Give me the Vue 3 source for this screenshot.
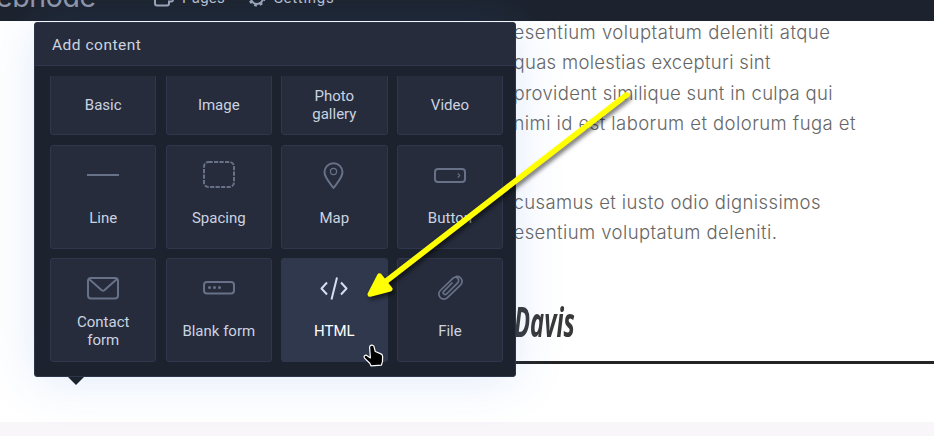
<script setup>
const tiles = [
  { label: 'Basic' },
  { label: 'Image' },
  { label: 'Photo gallery' },
  { label: 'Video' },
  { label: 'Line', icon: 'line' },
  { label: 'Spacing', icon: 'spacing' },
  { label: 'Map', icon: 'map' },
  { label: 'Button', icon: 'button' },
  { label: 'Contact form', icon: 'mail' },
  { label: 'Blank form', icon: 'form' },
  { label: 'HTML', icon: 'html', active: true },
  { label: 'File', icon: 'file' },
]
const paragraphs = [
  [
    { text: 'esentium voluptatum deleniti atque', width: 316.5 },
    { text: 'quas molestias excepturi sint', width: 257 },
    { text: 'provident similique sunt in culpa qui', width: 319 },
    { text: 'nimi id est laborum et dolorum fuga et', width: 342 },
  ],
  [
    { text: 'cusamus et iusto odio dignissimos', width: 307 },
    { text: 'esentium voluptatum deleniti.', width: 263.5 },
  ],
]
</script>

<template>
  <div class="page">
    <header class="topbar">
      <div class="bar">
        <span class="logo">ebnode</span>
        <span class="nav pages">
          <svg width="20" height="18" viewBox="0 0 20 18"><path d="M1 1v13.5a2 2 0 0 0 2 2h10a2 2 0 0 0 2-2v-2h2a2 2 0 0 0 2-2V1" /></svg>
          Pages
        </span>
        <span class="nav settings">
          <svg width="18" height="18" viewBox="0 0 18 18"><circle cx="9" cy="9" r="6" /><circle cx="9" cy="9" r="7.3" stroke-width="2.4" stroke-dasharray="2.8 2.93" /></svg>
          Settings
        </span>
      </div>
    </header>

    <main class="content">
      <div v-for="(p, i) in paragraphs" :key="i" class="para">
        <svg v-for="l in p" :key="l.text" class="line" width="420" height="30.4">
          <text x="-0.5" y="17.700" :textLength="l.width">{{ l.text }}</text>
        </svg>
      </div>
      <div class="signature"><span>Davis</span></div>
    </main>
    <footer class="footer"></footer>

    <section class="panel">
      <h2 class="title">Add content</h2>
      <div class="scroller">
        <div class="grid">
          <div v-for="t in tiles" :key="t.label" class="tile" :class="{ active: t.active }">
            <div class="icon">
              <svg v-if="t.icon" width="34" height="30" viewBox="0 0 34 30">
                <path v-if="t.icon === 'line'" d="M1 15h32" />
                <template v-else-if="t.icon === 'spacing'">
                  <rect x="2" y="2" width="30" height="25" rx="4.5" stroke-dasharray="4.2 1.3" />
                </template>
                <template v-else-if="t.icon === 'map'">
                  <path d="M16.5 28C13 23 7.500 17.500 7.500 12a9 8.700 0 0 1 18 0C25.500 17.500 20 23 16.500 28z" />
                  <circle cx="16.500" cy="11.500" r="3.100" stroke-width="1.200" />
                </template>
                <template v-else-if="t.icon === 'button'">
                  <rect x="2" y="9" width="30" height="13" rx="3" />
                  <path d="M24.800 13.500l2 2-2 2" stroke-width="1.100" />
                </template>
                <template v-else-if="t.icon === 'mail'">
                  <rect x="2" y="5" width="30" height="20.500" rx="3" />
                  <path d="M3 6l12.700 11.300q1.300 1 2.600 0L31 6" />
                </template>
                <template v-else-if="t.icon === 'form'">
                  <rect x="2" y="9" width="30" height="11.500" rx="3" />
                  <g class="dots"><circle cx="7.500" cy="14.500" r="1.500" /><circle cx="12.500" cy="14.500" r="1.500" /><circle cx="17.500" cy="14.500" r="1.500" /></g>
                </template>
                <path v-else-if="t.icon === 'html'" d="M10 9.500l-5.500 6 5.500 6M24 9.500l5.500 6-5.500 6M20 4.500L14.500 26.500" />
                <path v-else d="M19.500 9.500L10.800 18.300a1.900 1.900 0 0 0 2.700 2.700L24.700 9.800a3.200 3.200 0 0 0-4.600-4.600L7.300 17.500a5 5 0 0 0 7.100 7.100L27.200 12.300a5 5 0 0 0 .7-7.100a4.800 4.800 0 0 0-6.200-.8" stroke-width="1.700" />
              </svg>
            </div>
            <div class="label"><span>{{ t.label }}</span></div>
          </div>
        </div>
      </div>
    </section>
    <div class="pointer"></div>

    <svg class="overlay" width="934" height="436" viewBox="0 0 934 436">
      <g class="arrow">
        <path d="M626.500 95L385 282" stroke-width="5.600" />
        <path d="M370 294.300L379.500 275.800L390 289z" stroke-width="5" />
      </g>
      <path class="hand" d="M369.600 347.200a2.300 2.300 0 0 1 4.300-.9l1.400 5.200 5.600 2.400q1.700.8 1.700 2.700l-.1 4.700-1.100 3.900-10.300.7-1.300-2.700-5.300-5.100q-1.100-1.500.3-2.600 1.300-.7 2.700.4l2.900 2z" />
    </svg>
  </div>
</template>

<style>
body { margin: 0; }
</style>

<style scoped>
.page { position: relative; width: 934px; height: 436px; overflow: hidden; background: #fff; display: flex; flex-direction: column; font-family: Roboto, sans-serif; }
.topbar { flex: none; height: 21px; background: #1d232e; display: flex; align-items: flex-end; overflow: hidden; }
.bar { flex: none; height: 47px; display: flex; align-items: center; color: #b6bfd0; font-size: 15px; letter-spacing: .3px; }
.logo { width: 155px; margin-left: -4px; margin-bottom: 2px; font: 400 28.500px/36px Inter, sans-serif; letter-spacing: -.4px; color: #8f97aa; }
.nav { display: flex; align-items: center; gap: 8px; margin-left: 3px; }
.pages { width: 94px; }
.settings { margin-left: 0; letter-spacing: .7px; }
.nav svg { fill: none; stroke: #9ca5b9; stroke-width: 2; }
.content { flex: none; height: 400.500px; padding-left: 514px; box-sizing: border-box; }
.para { display: flex; flex-direction: column; margin-bottom: 48.500px; }
.line { flex: none; display: block; overflow: visible; font: 300 18.500px Inter, sans-serif; fill: #666; }
.signature { margin-top: -6px; height: 65px; padding-bottom: 2px; border-bottom: 3px solid #242424; color: #383838; font: italic 700 41px/54px "Open Sans", sans-serif; }
.signature span { display: inline-block; transform: scaleX(.58); transform-origin: left; }
.footer { flex: 1; background: #f8f6f9; }
.panel { position: absolute; left: 34px; top: 22px; width: 482px; height: 355px; box-sizing: border-box; border: 1px solid #2d354b; border-radius: 3px; background: #1d232e; display: flex; flex-direction: column; box-shadow: 0 3px 50px rgba(60, 125, 225, .16); }
.title { flex: none; box-sizing: border-box; height: 43px; margin: 0; padding: 0 17px; border-bottom: 1px solid #2f374c; background: #262c3b; color: #cbd3e1; font-size: 15.500px; font-weight: 400; line-height: 44px; letter-spacing: .5px; }
.scroller { margin: 10px 12px 14px 15px; overflow: hidden; }
.grid { margin-top: -44.800px; display: grid; grid-template-columns: repeat(4, 106.400px); grid-auto-rows: 104px; gap: 9.450px 9.200px; }
.tile { box-sizing: border-box; border: 1px solid #2f374c; border-radius: 3px; background: #262c3b; color: #cbd3e1; display: flex; flex-direction: column; align-items: center; }
.tile.active { background: #30384d; border-color: #30384d; color: #fff; }
.icon { flex: none; height: 52.400px; padding-top: 14px; box-sizing: border-box; }
.icon svg { display: block; margin-left: -.4px; fill: none; stroke: #677187; stroke-width: 2; stroke-linejoin: round; }
.active .icon svg { stroke: #d5def0; }
.icon .dots { fill: #677187; stroke: none; }
.label { height: 40px; width: 84px; display: flex; align-items: center; justify-content: center; text-align: center; font-size: 15px; line-height: 18px; }
.pointer { position: absolute; left: 68px; top: 377px; width: 16px; height: 8px; background: #1d232e; clip-path: polygon(0 0, 100% 0, 50% 100%); }
.overlay { position: absolute; left: 0; top: 0; pointer-events: none; }
.arrow { fill: #ff0; stroke: #ff0; stroke-linecap: round; stroke-linejoin: round; filter: drop-shadow(2px 3px 2px rgba(0, 0, 0, .55)); }
.hand { fill: #000; stroke: #fff; stroke-width: 1.200; stroke-linejoin: round; }
</style>
